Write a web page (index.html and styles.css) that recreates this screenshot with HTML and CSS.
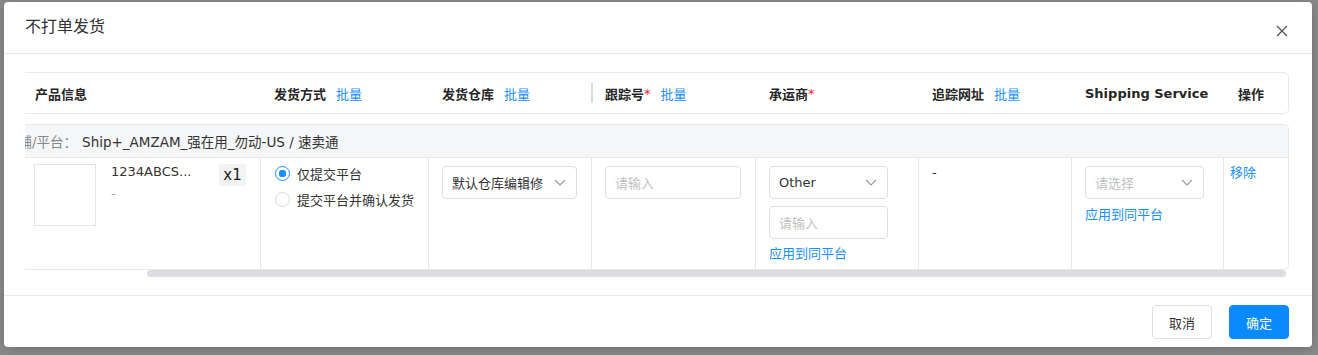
FILE: index.html
```html
<!DOCTYPE html>
<html lang="zh-CN">
<head>
    <meta charset="UTF-8">
    <title>不打单发货</title>
    <link rel="stylesheet" href="styles.css">
</head>
<body>
    <div class="modal">
        <div class="modal-header">
            <span class="modal-title">不打单发货</span>
            <button class="modal-close" type="button">
                <svg width="12" height="12" viewBox="0 0 12 12"><path d="M1 1L11 11M11 1L1 11" stroke="#555" stroke-width="1.3" fill="none"/></svg>
            </button>
        </div>

        <div class="modal-body">
            <div class="table-wrap">
                <div class="table-head">
                    <div class="th th-product">产品信息</div>
                    <div class="th">发货方式<a class="batch">批量</a></div>
                    <div class="th">发货仓库<a class="batch">批量</a></div>
                    <div class="th th-split">跟踪号<span class="req">*</span><a class="batch">批量</a></div>
                    <div class="th">承运商<span class="req">*</span></div>
                    <div class="th">追踪网址<a class="batch">批量</a></div>
                    <div class="th">Shipping Service</div>
                    <div class="th th-op">操作</div>
                </div>

                <div class="group-card">
                    <div class="group-title"><span class="group-label">店铺/平台：</span>Ship+_AMZAM_强在用_勿动-US / 速卖通</div>
                    <div class="table-row">
                        <div class="td td-product">
                            <div class="product-img"></div>
                            <div class="product-info">
                                <div class="product-name">1234ABCS...</div>
                                <div class="product-sub">-</div>
                            </div>
                            <span class="qty">x1</span>
                        </div>
                        <div class="td td-radio">
                            <label class="radio checked"><span class="radio-dot"></span>仅提交平台</label>
                            <label class="radio"><span class="radio-dot"></span>提交平台并确认发货</label>
                        </div>
                        <div class="td">
                            <div class="select w-wh">
                                <span>默认仓库编辑修</span>
                                <svg width="12" height="7" viewBox="0 0 12 7"><path d="M1 1L6 6L11 1" stroke="#999" stroke-width="1.2" fill="none"/></svg>
                            </div>
                        </div>
                        <div class="td">
                            <div class="input w-track">请输入</div>
                        </div>
                        <div class="td">
                            <div class="select w-small">
                                <span>Other</span>
                                <svg width="12" height="7" viewBox="0 0 12 7"><path d="M1 1L6 6L11 1" stroke="#999" stroke-width="1.2" fill="none"/></svg>
                            </div>
                            <div class="input w-small gap-top">请输入</div>
                            <a class="link apply-carrier">应用到同平台</a>
                        </div>
                        <div class="td td-text">-</div>
                        <div class="td">
                            <div class="select w-small">
                                <span class="placeholder">请选择</span>
                                <svg width="12" height="7" viewBox="0 0 12 7"><path d="M1 1L6 6L11 1" stroke="#999" stroke-width="1.2" fill="none"/></svg>
                            </div>
                            <a class="link apply-service">应用到同平台</a>
                        </div>
                        <div class="td td-op"><a class="link">移除</a></div>
                    </div>
                </div>
                <div class="scrollbar"><div class="scroll-thumb"></div></div>
            </div>
        </div>

        <div class="modal-footer">
            <button class="btn" type="button">取消</button>
            <button class="btn btn-primary" type="button">确定</button>
        </div>
    </div>
</body>
</html>
```

FILE: styles.css
```css
* {
    box-sizing: border-box;
}

body {
    margin: 0;
    height: 355px;
    padding: 2px 6px 8px 4px;
    background-color: #8a8a8a;
    font-family: "DejaVu Sans", "Noto Sans CJK SC", sans-serif;
    font-size: 13px;
    color: #333;
    overflow: hidden;
}

.modal {
    height: 345px;
    display: flex;
    flex-direction: column;
    background-color: #fff;
    border-radius: 4px;
    box-shadow: 0 2px 12px rgba(0,0,0,0.2);
}

.modal-header {
    height: 52px;
    flex: none;
    display: flex;
    align-items: center;
    justify-content: space-between;
    padding: 0 24px 0 21px;
    border-bottom: 1px solid #e8e8e8;
}

.modal-title {
    font-size: 16px;
    color: #333;
    line-height: 22px;
    margin-top: -2px;
}

.modal-close {
    border: none;
    background: none;
    padding: 0;
    width: 12px;
    height: 12px;
    margin-top: 6px;
    display: flex;
}

.modal-body {
    flex: 1;
    padding: 18px 23px 0 21px;
}

.table-wrap {
    width: 1264px;
    overflow: hidden;
}

.table-head,
.table-row {
    display: grid;
    grid-template-columns: 235px 168px 163px 164px 163px 153px 152px 66px;
}

.table-head {
    height: 42px;
    border: 1px solid #e8e8e8;
    border-left: none;
    border-radius: 0 5px 5px 0;
}

.th {
    display: flex;
    align-items: center;
    padding-left: 14px;
    font-weight: bold;
    color: #262626;
}

.th-product {
    padding-left: 10px;
}

.th-split {
    padding-left: 0;
}

.th-split::before {
    content: "";
    width: 2px;
    height: 20px;
    background-color: #dcdcdc;
    margin-right: 12px;
}

.th-op {
    padding-left: 15px;
}

.batch {
    margin-left: 10px;
    font-weight: normal;
    color: #1890ff;
}

.req {
    color: #f5222d;
    font-weight: normal;
}

.group-card {
    margin-top: 10px;
    border: 1px solid #e8e8e8;
    border-left: none;
    border-radius: 0 5px 5px 0;
}

/* the table is scrolled right, so the label is partly hidden */
.group-title {
    height: 33px;
    display: flex;
    align-items: center;
    background-color: #f5f6f8;
    border-bottom: 1px solid #e8e8e8;
    font-size: 13.5px;
    white-space: nowrap;
    overflow: hidden;
    border-radius: 0 5px 0 0;
}

.group-label {
    margin-left: -20px;
    margin-right: 5px;
    color: #888;
}

.table-row {
    height: 111px;
}

.td {
    border-left: 1px solid #e8e8e8;
    padding: 8px 14px 0 13px;
}

.td-product {
    border-left: none;
    display: flex;
    align-items: flex-start;
    padding: 6px 14px 0 9px;
}

.product-img {
    width: 62px;
    height: 62px;
    border: 1px solid #e5e5e5;
    flex: none;
}

.product-info {
    flex: 1;
    margin-left: 15px;
    line-height: 20px;
    margin-top: -2px;
}

.product-sub {
    color: #999;
    margin-top: 2px;
}

.qty {
    width: 27px;
    height: 22px;
    display: flex;
    align-items: center;
    justify-content: center;
    background-color: #f2f3f5;
    font-size: 15px;
    color: #222;
    border-radius: 2px;
}

.td-radio {
    padding: 5px 0 0 14px;
}

.radio {
    display: flex;
    align-items: center;
    height: 20px;
    margin-bottom: 6px;
    font-family: "Noto Sans CJK SC", sans-serif;
    color: #333;
}

.radio-dot {
    width: 15px;
    height: 15px;
    border: 1px solid #d9d9d9;
    border-radius: 50%;
    margin-right: 7px;
    background-color: #fff;
}

.radio.checked .radio-dot {
    border-color: #1890ff;
    background: radial-gradient(circle, #1890ff 0, #1890ff 3.5px, #fff 4px);
}

.select,
.input {
    height: 33px;
    border: 1px solid #dcdfe6;
    border-radius: 4px;
    display: flex;
    align-items: center;
    justify-content: space-between;
    padding: 0 10px 0 9px;
}

.input {
    color: #bfbfbf;
}

.placeholder {
    color: #bfbfbf;
}

.w-wh {
    width: 135px;
}

.w-track {
    width: 136px;
}

.w-small {
    width: 119px;
}

.gap-top {
    margin-top: 7px;
}

.link {
    display: block;
    color: #1890ff;
    line-height: 20px;
    cursor: pointer;
}

.apply-carrier {
    margin-top: 5px;
}

.apply-service {
    margin-top: 6px;
}

.td-text {
    padding-top: 5px;
    line-height: 20px;
}

.td-op {
    padding: 5px 0 0 6px;
}

.scrollbar {
    height: 7px;
    padding-left: 122px;
}

.scroll-thumb {
    width: 1139px;
    height: 7px;
    background-color: #dcdde1;
    border-radius: 4px;
}

.modal-footer {
    height: 52px;
    flex: none;
    display: flex;
    justify-content: flex-end;
    align-items: flex-start;
    gap: 17px;
    padding: 9px 23px 0 0;
    border-top: 1px solid #e8e8e8;
}

.btn {
    width: 60px;
    height: 34px;
    border: 1px solid #dcdfe6;
    border-radius: 4px;
    background-color: #fff;
    font-family: "Noto Sans CJK SC", sans-serif;
    font-size: 13px;
    color: #333;
    cursor: pointer;
}

.btn-primary {
    border-color: #0a8aff;
    background-color: #0a8aff;
    color: #fff;
}
```
